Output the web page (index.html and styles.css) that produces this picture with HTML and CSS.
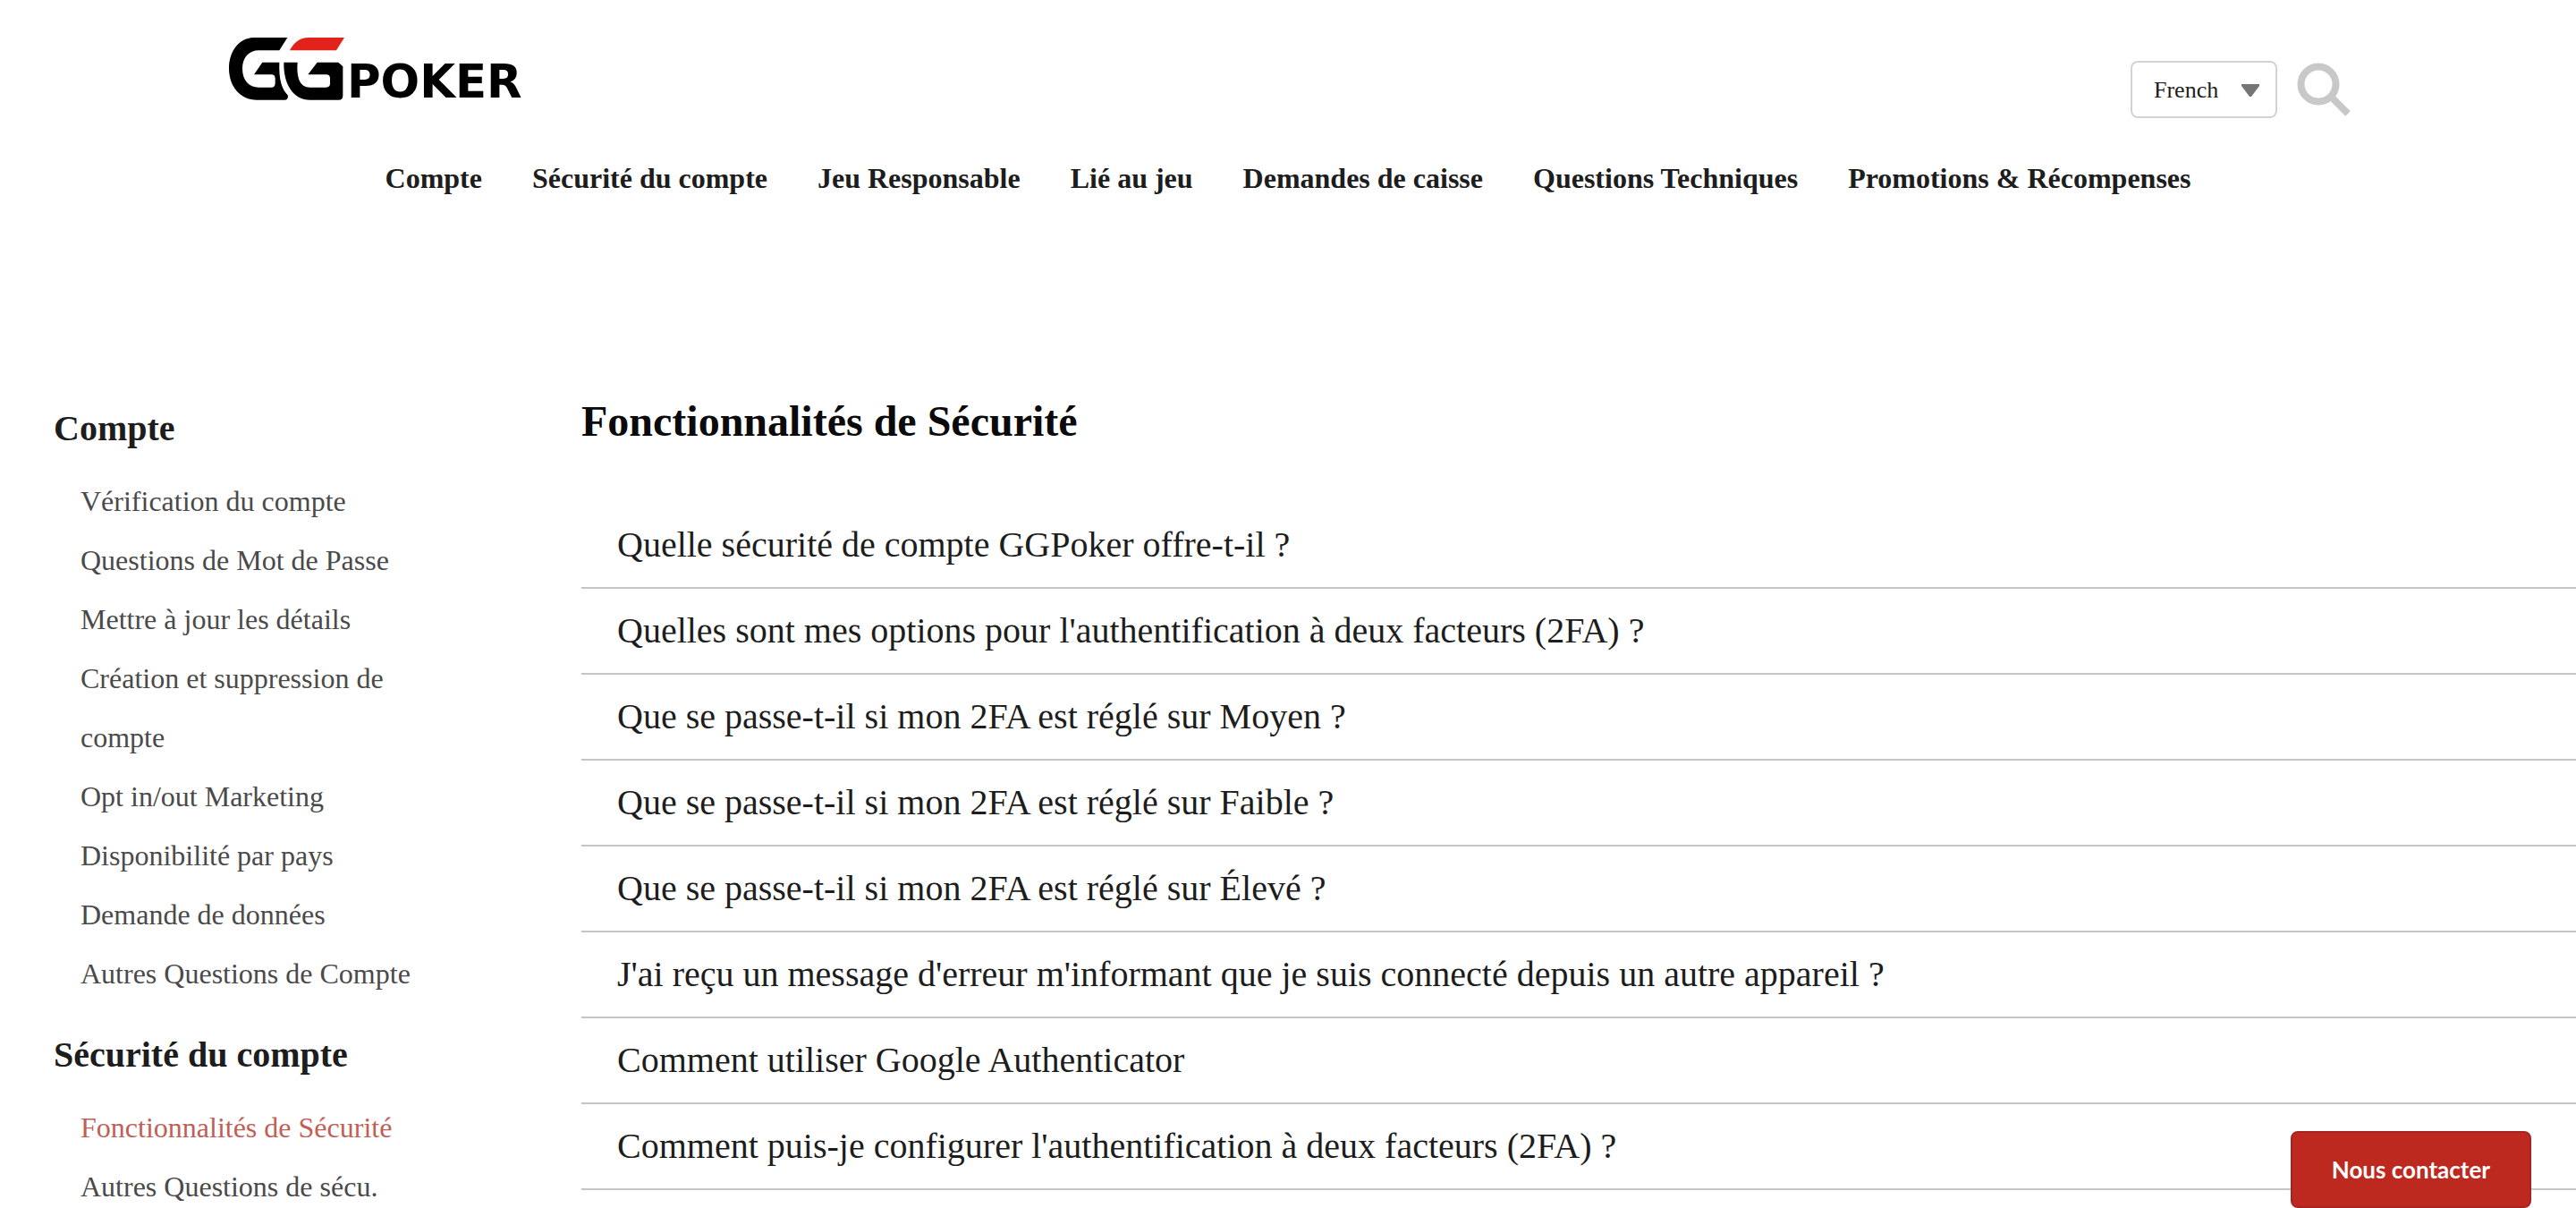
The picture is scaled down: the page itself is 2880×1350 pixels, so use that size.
FILE: index.html
```html
<!DOCTYPE html>
<html lang="fr">
<head>
  <meta charset="utf-8">
  <meta name="viewport" content="width=device-width, initial-scale=1">
  <title>Fonctionnalités de Sécurité – GGPoker</title>
  <link rel="stylesheet" href="styles.css">
</head>
<body>
  <header class="header">
    <div class="header-top">
      <a class="logo" href="#" aria-label="GGPoker">
        <svg class="logo-art" viewBox="0 -18 1080 300" aria-hidden="true">
          <path d="M214 18H100C50 20 18 65 18 122C18 180 55 227 112 227H205Q216 227 216 212C195 190 185 160 187 101H130L102 142H160Q173 142 173 155V170Q173 185 160 185H118C85 185 63 160 63 122C63 85 85 61 118 61H187Z"/>
          <path d="M202 101H248C244 150 255 185 290 185H344Q357 185 357 172V155Q357 142 344 142H283L314 101H385L400 115V212Q400 227 386 227H290C235 227 200 175 202 101Z"/>
          <path class="logo-accent" d="M222 61C235 35 255 18 285 18H405L378 61Z"/>
          <text class="logo-word" x="414" y="219">POKER</text>
        </svg>
      </a>
      <div class="tools">
        <div class="language">
          <select class="language-select" aria-label="Langue">
            <option>French</option>
          </select>
          <svg class="language-arrow" viewBox="0 0 20 14" aria-hidden="true"><path d="M0 0h20v2L11 14h-2L0 2z"/></svg>
        </div>
        <button class="search" type="button" aria-label="Rechercher">
          <svg class="search-icon" viewBox="0 0 60 60" aria-hidden="true">
            <circle cx="24" cy="24" r="19.5"/>
            <path d="M39 39L57 57"/>
          </svg>
        </button>
      </div>
    </div>
    <nav class="nav" aria-label="Catégories">
      <a href="#">Compte</a>
      <a href="#">Sécurité du compte</a>
      <a href="#">Jeu Responsable</a>
      <a href="#">Lié au jeu</a>
      <a href="#">Demandes de caisse</a>
      <a href="#">Questions Techniques</a>
      <a href="#">Promotions &amp; Récompenses</a>
    </nav>
  </header>

  <div class="layout">
    <aside class="sidebar">
      <section class="group">
        <h2>Compte</h2>
        <ul>
          <li><a href="#">Vérification du compte</a></li>
          <li><a href="#">Questions de Mot de Passe</a></li>
          <li><a href="#">Mettre à jour les détails</a></li>
          <li><a href="#">Création et suppression de compte</a></li>
          <li><a href="#">Opt in/out Marketing</a></li>
          <li><a href="#">Disponibilité par pays</a></li>
          <li><a href="#">Demande de données</a></li>
          <li><a href="#">Autres Questions de Compte</a></li>
        </ul>
      </section>
      <section class="group">
        <h2>Sécurité du compte</h2>
        <ul>
          <li><a class="current" href="#" aria-current="page">Fonctionnalités de Sécurité</a></li>
          <li><a href="#">Autres Questions de sécu.</a></li>
        </ul>
      </section>
    </aside>

    <main class="content">
      <h1>Fonctionnalités de Sécurité</h1>
      <ul class="articles">
        <li><a href="#">Quelle sécurité de compte GGPoker offre-t-il ?</a></li>
        <li><a href="#">Quelles sont mes options pour l'authentification à deux facteurs (2FA) ?</a></li>
        <li><a href="#">Que se passe-t-il si mon 2FA est réglé sur Moyen ?</a></li>
        <li><a href="#">Que se passe-t-il si mon 2FA est réglé sur Faible ?</a></li>
        <li><a href="#">Que se passe-t-il si mon 2FA est réglé sur Élevé ?</a></li>
        <li><a href="#">J'ai reçu un message d'erreur m'informant que je suis connecté depuis un autre appareil ?</a></li>
        <li><a href="#">Comment utiliser Google Authenticator</a></li>
        <li><a href="#">Comment puis-je configurer l'authentification à deux facteurs (2FA) ?</a></li>
      </ul>
    </main>
  </div>

  <button class="contact" type="button">Nous contacter</button>
</body>
</html>
```
FILE: styles.css
```css
* {
  box-sizing: border-box;
}

body {
  margin: 0;
  background: #fff;
  color: #1d1d1d;
  font-family: "Liberation Serif", "Times New Roman", serif;
  font-size: 32px;
}

a {
  color: inherit;
  text-decoration: none;
}

ul {
  margin: 0;
  padding: 0;
  list-style: none;
}

.header-top {
  display: flex;
  justify-content: space-between;
  align-items: flex-start;
  padding: 30px 252px 0 250px;
}

.logo-art {
  display: block;
  width: 360px;
  height: 100px;
}

.logo-accent {
  fill: #e2231c;
}

.logo-word {
  font: bold 154px "DejaVu Sans", sans-serif;
}

.tools {
  display: flex;
  align-items: center;
  gap: 22px;
  padding-top: 38px;
}

.language {
  position: relative;
}

.language-select {
  display: block;
  appearance: none;
  width: 164px;
  height: 64px;
  padding: 0 60px 0 24px;
  border: 2px solid #d3d3d3;
  border-radius: 8px;
  background: #fff;
  color: #1d1d1d;
  font: 26px "Liberation Serif", "Times New Roman", serif;
}

.language-arrow {
  position: absolute;
  top: 26px;
  right: 20px;
  width: 20px;
  height: 14px;
  fill: #757575;
  pointer-events: none;
}

.search {
  padding: 0;
  border: 0;
  background: none;
}

.search-icon {
  display: block;
  width: 60px;
  height: 60px;
  fill: none;
  stroke: #c8c8c8;
  stroke-width: 8;
}

.nav {
  display: flex;
  justify-content: center;
  gap: 56px;
  padding-top: 47px;
  font-weight: bold;
  line-height: 40px;
}

.layout {
  display: grid;
  grid-template-columns: 430px 1fr;
  column-gap: 160px;
  padding: 224px 0 0 60px;
}

.sidebar {
  padding-top: 12px;
}

.group + .group {
  margin-top: 34px;
}

.group h2 {
  margin: 0 0 24px;
  font-size: 40px;
  line-height: 48px;
}

.group ul {
  padding-left: 30px;
  color: #4a4a4a;
  line-height: 66px;
}

.group .current {
  color: #bf5f57;
}

.content h1 {
  margin: 0 0 63px;
  color: #0a0a0a;
  font-size: 48px;
  line-height: 56px;
}

.articles li {
  padding-left: 40px;
  border-bottom: 2px solid #c5c5c5;
  font-size: 40px;
  line-height: 94px;
}

.contact {
  position: fixed;
  right: 50px;
  bottom: 0;
  padding: 0 44px;
  height: 86px;
  border: 2px solid #a82423;
  border-radius: 8px;
  background: #bd291e;
  color: #fff;
  font: bold 26px Lato, sans-serif;
}
```
